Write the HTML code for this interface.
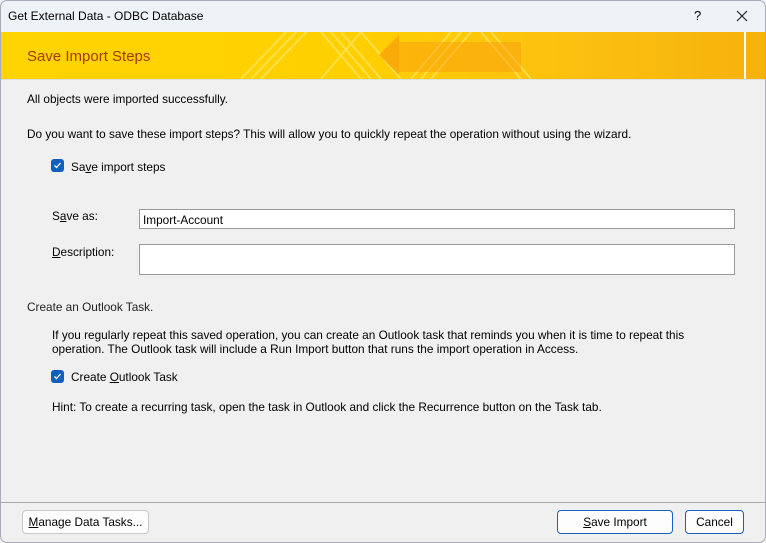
<!DOCTYPE html>
<html><head><style>
*{margin:0;padding:0;box-sizing:border-box}
body{width:766px;height:543px;overflow:hidden;background:#f0f0f0;font-family:"Liberation Sans",sans-serif;font-size:11.8px;color:#000;position:relative}
.abs{position:absolute;white-space:nowrap}
#frame{position:absolute;left:0;top:0;width:766px;height:543px;border:1px solid #aab;border-radius:7px;pointer-events:none}
#title{position:absolute;left:0;top:0;width:766px;height:32px;background:#eef3f8}
#banner{position:absolute;left:1px;top:32px;width:764px;height:47px;background:linear-gradient(90deg,#ffd400 0%,#ffd000 45%,#fbc010 75%,#f7b20c 100%);overflow:hidden}
.cb{position:absolute;width:13px;height:13px;background:#0f5fbf;border-radius:3px}
.cb svg{position:absolute;left:1px;top:1px}
.inp{position:absolute;background:#fff;border:1px solid #9a9a9a}
.btn{position:absolute;background:#fdfdfd;border:1px solid #c8c8c8;border-radius:4px;text-align:center;line-height:23px}
.btn.d{border:1px solid #1463c4}
</style></head><body>
<div id="title"></div>
<div class="abs" style="left:8px;top:9px;font-size:12px">Get External Data - ODBC Database</div>
<div class="abs" style="left:694px;top:8px;font-size:13px">?</div>
<svg class="abs" style="left:736px;top:10px" width="12" height="12"><path d="M1 1L11 11M11 1L1 11" stroke="#222" stroke-width="1.2"/></svg>
<div id="banner">
<svg width="764" height="47" style="position:absolute;left:0;top:0">
<g stroke="#ffe866" stroke-width="2" fill="none" opacity=".7">
<path d="M240 47L290 -5M250 47L300 -5M260 47L310 -5"/>
<path d="M320 0L360 47M330 0L370 47M340 0L380 47"/>
<path d="M320 47L360 0L400 47"/>
<path d="M410 47L450 0M420 47L460 0M430 47L470 0"/>
<path d="M480 0L520 47M490 0L530 47"/>
</g>
<path d="M378 23L398 3L398 43Z" fill="#f7a20c" opacity=".8"/>
<path d="M398 10L520 10L520 40L398 40Z" fill="#fa9d10" opacity=".5"/>
<path d="M744 0V47" stroke="#fff" stroke-width="2"/>
</svg>
<div class="abs" style="left:26px;top:16px;font-size:15px;color:#a33a00">Save Import Steps</div>
</div>
<div style="position:absolute;left:1px;top:79px;width:764px;height:1px;background:#e0e0e0"></div>
<div class="abs" style="left:27px;top:92px">All objects were imported successfully.</div>
<div class="abs" style="left:27px;top:127px">Do you want to save these import steps? This will allow you to quickly repeat the operation without using the wizard.</div>
<div class="cb" style="left:51px;top:159px"><svg width="11" height="11"><path d="M2.5 5.5L4.5 7.5L8.5 3" stroke="#fff" stroke-width="1.3" fill="none"/></svg></div>
<div class="abs" style="left:71px;top:160px">Sa<u>v</u>e import steps</div>
<div class="abs" style="left:52px;top:209px">S<u>a</u>ve as:</div>
<div class="inp" style="left:139px;top:209px;width:596px;height:20px"><span class="abs" style="left:3px;top:3px">Import-Account</span></div>
<div class="abs" style="left:52px;top:245px"><u>D</u>escription:</div>
<div class="inp" style="left:139px;top:244px;width:596px;height:31px"></div>
<div class="abs" style="left:27px;top:300px;color:#222">Create an Outlook Task.</div>
<div class="abs" style="left:52px;top:328px;line-height:14px">If you regularly repeat this saved operation, you can create an Outlook task that reminds you when it is time to repeat this<br>operation. The Outlook task will include a Run Import button that runs the import operation in Access.</div>
<div class="cb" style="left:51px;top:370px"><svg width="11" height="11"><path d="M2.5 5.5L4.5 7.5L8.5 3" stroke="#fff" stroke-width="1.3" fill="none"/></svg></div>
<div class="abs" style="left:71px;top:370px">Create <u>O</u>utlook Task</div>
<div class="abs" style="left:52px;top:400px">Hint: To create a recurring task, open the task in Outlook and click the Recurrence button on the Task tab.</div>
<div style="position:absolute;left:1px;top:502px;width:764px;height:1px;background:#a8a8a8"></div>
<div class="btn" style="left:22px;top:510px;width:127px;height:24px"><u>M</u>anage Data Tasks...</div>
<div class="btn d" style="left:557px;top:510px;width:116px;height:24px"><u>S</u>ave Import</div>
<div class="btn d" style="left:685px;top:510px;width:59px;height:24px">Cancel</div>
<div id="frame"></div>
</body></html>
